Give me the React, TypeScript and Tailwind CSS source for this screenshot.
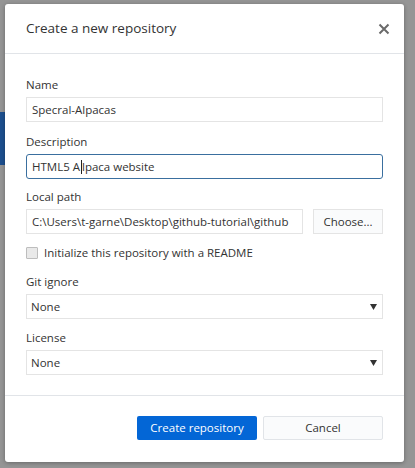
import React from "react";

const font = { fontFamily: '"Open Sans", "Noto Sans", "Liberation Sans", sans-serif' };

function Label({ children }: { children: React.ReactNode }) {
  return <div className="h-4 text-[11.5px] leading-4 text-[#333]">{children}</div>;
}

function Field({ label, className, children }: { label: string; className?: string; children: React.ReactNode }) {
  return (
    <div className={"flex flex-col gap-1 " + (className ?? "")}>
      <Label>{label}</Label>
      {children}
    </div>
  );
}

function Select() {
  return (
    <div className="flex h-[25px] items-center justify-between border border-[#e4e4e4] bg-white pl-[4px] pr-[5px] text-[11.5px] text-[#333]">
      <span>None</span>
      <svg width="7" height="6" viewBox="0 0 7 6">
        <path d="M0 0 H7 L3.5 6 Z" fill="#333" />
      </svg>
    </div>
  );
}

export default function App() {
  return (
    <div className="flex h-[468px] w-[415px] bg-[#959595]" style={font}>
      <div className="flex w-[5px] flex-col">
        <div className="mt-[112px] h-[53px] bg-[#1d4f8e]" />
      </div>
      <div className="mt-[4px] flex h-[458px] w-[399px] flex-col rounded-[3px] bg-white shadow-[0_1px_4px_rgba(0,0,0,0.3)]">
        <div className="flex h-[50px] items-center justify-between border-b border-[#e1e4e8] pl-[21px] pr-[14px]">
          <h1 className="text-[13.5px] text-[#333]">Create a new repository</h1>
          <svg width="12" height="12" viewBox="0 0 12 12">
            <path d="M1.5 1.5 L10.5 10.5 M10.5 1.5 L1.5 10.5" stroke="#6a6a6a" strokeWidth="2" />
          </svg>
        </div>
        <div className="flex flex-col px-[21px] pt-[23px] pb-[20px]">
          <Field label="Name">
            <div className="flex h-[25px] items-center border border-[#e4e4e4] px-[5px] text-[11.5px] text-[#333]">
              Specral-Alpacas
            </div>
          </Field>
          <Field label="Description" className="mt-3">
            <div className="flex h-[25px] items-center rounded-[3px] border border-[#3a6f9f] px-[5px] text-[11.5px] text-[#333]">
              HTML5 A<span className="mx-[0.5px] inline-block h-[14px] w-px bg-[#222]" />lpaca website
            </div>
          </Field>
          <Field label="Local path" className="mt-[10px]">
            <div className="flex gap-[10px]">
              <div className="flex h-[25px] flex-1 items-center overflow-hidden whitespace-nowrap border border-[#e4e4e4] px-[5px] text-[11.5px] text-[#333]">
                C:\Users\t-garne\Desktop\github-tutorial\github
              </div>
              <div className="flex h-[25px] w-[70px] items-center justify-center border border-[#e4e4e4] bg-[#fafbfc] text-[11.5px] text-[#333]">
                Choose...
              </div>
            </div>
          </Field>
          <div className="mt-[11px] flex h-4 items-center gap-[6px]">
            <div className="h-[12px] w-[12px] rounded-[1px] border border-[#bdbdbd] bg-[#e9e9e9]" />
            <span className="text-[11.5px] text-[#333]">Initialize this repository with a README</span>
          </div>
          <Field label="Git ignore" className="mt-[13px]">
            <Select />
          </Field>
          <Field label="License" className="mt-[11px]">
            <Select />
          </Field>
        </div>
        <div className="flex justify-end gap-[6px] border-t border-[#e1e4e8] px-[21px] pt-[20px]">
          <div className="flex h-[24px] w-[120px] items-center justify-center rounded-[2px] bg-[#0366d6] text-[11.5px] text-white">
            Create repository
          </div>
          <div className="flex h-[24px] w-[120px] items-center justify-center rounded-[2px] border border-[#e1e4e8] bg-[#fafbfc] text-[11.5px] text-[#333]">
            Cancel
          </div>
        </div>
      </div>
    </div>
  );
}
